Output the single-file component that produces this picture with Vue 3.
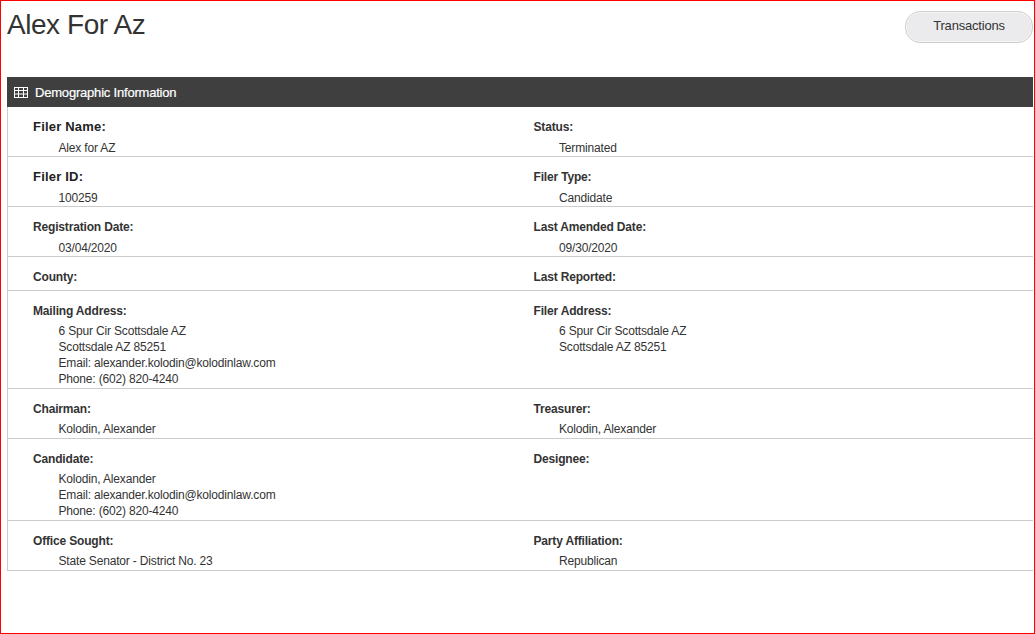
<script setup>
const rows = [
  { cols: [
    { label: 'Filer Name:', strong: true, lines: ['Alex for AZ'] },
    { label: 'Status:', lines: ['Terminated'] },
  ] },
  { cols: [
    { label: 'Filer ID:', strong: true, lines: ['100259'] },
    { label: 'Filer Type:', lines: ['Candidate'] },
  ] },
  { cols: [
    { label: 'Registration Date:', lines: ['03/04/2020'] },
    { label: 'Last Amended Date:', lines: ['09/30/2020'] },
  ] },
  { cols: [
    { label: 'County:', lines: [] },
    { label: 'Last Reported:', lines: [] },
  ] },
  { tight: true, cols: [
    { label: 'Mailing Address:', lines: ['6 Spur Cir Scottsdale AZ', 'Scottsdale AZ 85251', 'Email: alexander.kolodin@kolodinlaw.com', 'Phone: (602) 820-4240'] },
    { label: 'Filer Address:', lines: ['6 Spur Cir Scottsdale AZ', 'Scottsdale AZ 85251'] },
  ] },
  { tight: true, cols: [
    { label: 'Chairman:', lines: ['Kolodin, Alexander'] },
    { label: 'Treasurer:', lines: ['Kolodin, Alexander'] },
  ] },
  { tight: true, cols: [
    { label: 'Candidate:', lines: ['Kolodin, Alexander', 'Email: alexander.kolodin@kolodinlaw.com', 'Phone: (602) 820-4240'] },
    { label: 'Designee:', lines: [] },
  ] },
  { tight: true, cols: [
    { label: 'Office Sought:', lines: ['State Senator - District No. 23'] },
    { label: 'Party Affiliation:', lines: ['Republican'] },
  ] },
]
</script>

<template>
  <div class="page">
    <header class="top">
      <h1 class="title">Alex For Az</h1>
      <button class="btn" type="button">Transactions</button>
    </header>
    <section class="panel">
      <div class="bar">
        <svg class="icon" width="14" height="11" viewBox="0 0 14 11" aria-hidden="true">
          <rect x="0.5" y="0.5" width="13" height="10" fill="none" stroke="#fff" />
          <path d="M0 3.5H14M0 7H14" stroke="#fff" stroke-width="1.2" fill="none" />
          <path d="M4.5 0V11M9.5 0V11" stroke="#fff" fill="none" />
        </svg>
        <span>Demographic Information</span>
      </div>
      <div class="body">
        <div v-for="(row, i) in rows" :key="i" class="row" :class="{ tight: row.tight }">
          <div v-for="col in row.cols" :key="col.label" class="col">
            <div class="label" :class="{ strong: col.strong }">{{ col.label }}</div>
            <div v-if="col.lines.length" class="value">
              <div v-for="(line, j) in col.lines" :key="j" class="line">{{ line }}</div>
            </div>
          </div>
        </div>
      </div>
    </section>
  </div>
</template>

<style>
html, body { margin: 0; background: #fff; }
</style>

<style scoped>
.page {
  box-sizing: border-box;
  width: 1035px;
  height: 634px;
  border: 1px solid #f00;
  padding: 1px 1px 0 6px;
  font-family: "Liberation Sans", Arial, sans-serif;
  font-size: 12px;
  letter-spacing: -0.17px;
  color: #333;
  overflow: hidden;
}
.top {
  display: flex;
  justify-content: space-between;
  align-items: flex-start;
  height: 75px;
}
.title {
  margin: 7px 0 0;
  font-size: 28px;
  line-height: 32px;
  font-weight: 400;
  letter-spacing: -0.45px;
}
.btn {
  box-sizing: border-box;
  width: 128px;
  height: 32px;
  margin-top: 9px;
  padding: 0 0 3px;
  border: 1px solid #cfcfcf;
  border-radius: 15px;
  background: #ebebee;
  box-shadow: inset 0 0 0 1px #f6f6f7;
  font-family: inherit;
  font-size: 13px;
  letter-spacing: -0.2px;
  color: #333;
}
.bar {
  display: flex;
  align-items: center;
  gap: 7px;
  height: 30px;
  padding-left: 7px;
  background: #3f3f3f;
  color: #fff;
  font-size: 13px;
  letter-spacing: -0.2px;
  -webkit-text-stroke: 0.2px #fff;
}
.icon { flex: none; }
.body { border-left: 1px solid #ccc; }
.row {
  display: grid;
  grid-template-columns: 500.5px 1fr;
  padding-left: 25px;
  border-bottom: 1px solid #ccc;
}
.col { padding: 10px 0 2px; }
.label {
  font-weight: 700;
  line-height: 21px;
}
.label.strong {
  font-size: 13px;
  line-height: 19px;
  padding-bottom: 2px;
  letter-spacing: 0.2px;
  color: #222;
}
.value {
  margin: 2px 0 -2px;
  padding-left: 25.5px;
}
.tight .value {
  margin: 1px 0 -1px;
}
.line { line-height: 16px; }
</style>
